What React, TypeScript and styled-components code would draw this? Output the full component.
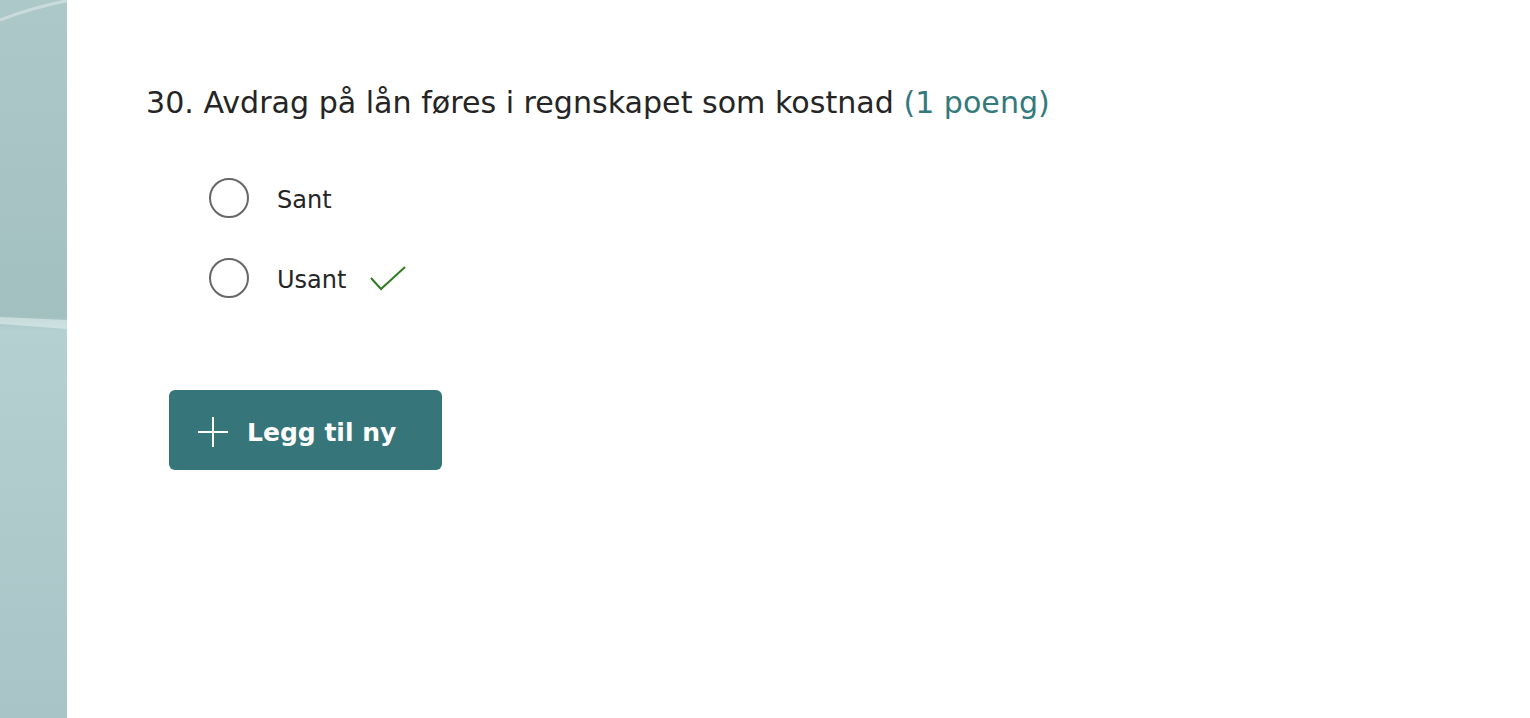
import React from "react";
import styled, { createGlobalStyle } from "styled-components";

const Global = createGlobalStyle`
  html, body { margin: 0; padding: 0; background: #fff; }
  body { font-family: "DejaVu Sans", "Liberation Sans", sans-serif; }
`;

const Page = styled.div`
  display: flex;
  width: 1530px;
  height: 718px;
  overflow: hidden;
`;

const Sidebar = styled.div`
  position: relative;
  width: 67px;
  flex: none;
  background: linear-gradient(180deg, #adc8c9 0%, #a3c0c1 44%, #b5d0d1 46%, #a9c4c6 100%);
  overflow: hidden;
`;

const Wave = styled.svg`
  position: absolute;
  left: 0;
  top: 0;
  width: 67px;
  height: 718px;
`;

const Main = styled.main`
  flex: 1;
  padding: 84px 0 0 79px;
  display: flex;
  flex-direction: column;
`;

const Question = styled.h2`
  margin: 0;
  font-weight: 400;
  font-size: 30.1px;
  line-height: 38px;
  color: #252525;
`;

const Points = styled.span`
  color: #347a7c;
`;

const Options = styled.div`
  display: flex;
  flex-direction: column;
  gap: 40px;
  margin: 56px 0 0 63px;
`;

const Option = styled.label`
  display: flex;
  align-items: center;
  height: 40px;
  font-size: 24px;
  color: #252525;
`;

const Label = styled.span`
  padding-top: 3px;
`;

const Radio = styled.span`
  box-sizing: border-box;
  width: 40px;
  height: 40px;
  border-radius: 50%;
  border: 2px solid #676767;
  margin-right: 28px;
  flex: none;
`;

const Check = styled.svg`
  margin-left: 23px;
  margin-top: 1px;
`;

const AddButton = styled.button`
  margin: 92px 0 0 23px;
  align-self: flex-start;
  display: flex;
  align-items: center;
  gap: 18px;
  width: 273px;
  height: 80px;
  padding: 4px 0 0 28px;
  box-sizing: border-box;
  border: none;
  border-radius: 6px;
  background: #36767a;
  color: #fff;
  font-family: "DejaVu Sans", sans-serif;
  font-weight: 700;
  font-size: 25px;
  cursor: pointer;
`;

export default function App() {
  return (
    <>
      <Global />
      <Page>
        <Sidebar>
          <Wave viewBox="0 0 67 718" preserveAspectRatio="none">
            <path d="M0 20 Q30 8 70 0" stroke="rgba(255,255,255,0.35)" strokeWidth="3" fill="none" />
            <path d="M0 317 L67 320 L67 329 L0 324 Z" fill="rgba(235,245,245,0.5)" />
          </Wave>
        </Sidebar>
        <Main>
          <Question>
            30. Avdrag på lån føres i regnskapet som kostnad <Points>(1 poeng)</Points>
          </Question>
          <Options>
            <Option>
              <Radio />
              <Label>Sant</Label>
            </Option>
            <Option>
              <Radio />
              <Label>Usant</Label>
              <Check width="38" height="28" viewBox="0 0 38 28">
                <path d="M2 13 L12 24 L36 2" stroke="#2f7d1f" strokeWidth="2" fill="none" />
              </Check>
            </Option>
          </Options>
          <AddButton>
            <svg width="32" height="32" viewBox="0 0 32 32">
              <path d="M16 1 V31 M1 16 H31" stroke="#fff" strokeWidth="2" />
            </svg>
            Legg til ny
          </AddButton>
        </Main>
      </Page>
    </>
  );
}
